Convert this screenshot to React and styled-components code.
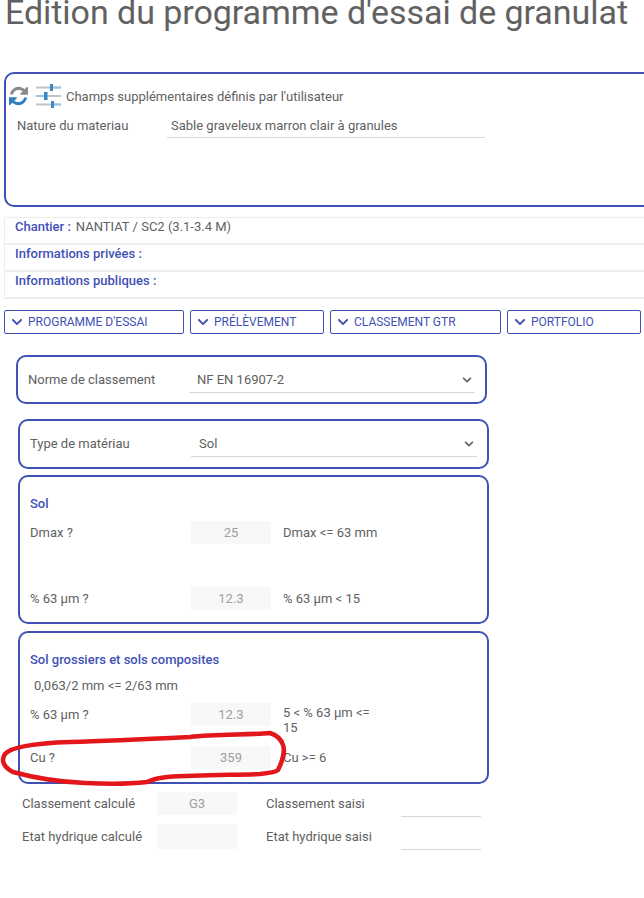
import React from 'react';
import styled, { createGlobalStyle } from 'styled-components';
import { FaChevronDown } from 'react-icons/fa';

const blue = '#3f51b5';

const GlobalStyle = createGlobalStyle`
  html, body {
    margin: 0;
    padding: 0;
    background: #fff;
    overflow: hidden;
  }
  body {
    font-family: Roboto, "Liberation Sans", sans-serif;
    color: #616161;
    font-size: 13px;
  }
`;

const Page = styled.div`
  position: relative;
  width: 644px;
  height: 898px;
  overflow: hidden;
`;

const Title = styled.h1`
  margin: -8px 0 0 5px;
  height: 80px;
  font-size: 34px;
  line-height: 40px;
  font-weight: 400;
  letter-spacing: -0.05px;
  white-space: nowrap;
  color: #616161;
`;

const UserPanel = styled.section`
  box-sizing: border-box;
  margin-left: 4px;
  width: 660px;
  height: 135px;
  border: 2px solid ${blue};
  border-radius: 10px;
  padding: 9px 0 0 2px;
`;

const PanelHead = styled.div`
  display: flex;
  align-items: center;
  height: 26px;
  gap: 5px;
`;

const IconGroup = styled.div`
  display: flex;
  align-items: center;
  gap: 7px;
`;

const NatureRow = styled.div`
  display: flex;
  align-items: flex-start;
  margin: 8px 0 0 9px;
`;

const NatureLabel = styled.div`
  width: 150px;
  line-height: 18px;
`;

const NatureValue = styled.div`
  width: 318px;
  height: 21px;
  box-sizing: border-box;
  padding-left: 4px;
  line-height: 18px;
  border-bottom: 1px solid #d8d8d8;
`;

const InfoBox = styled.section`
  margin: 10px 0 0 4px;
  width: 660px;
  border-top: 1px solid #eeeeee;
  border-left: 1px solid #eeeeee;
`;

const InfoRow = styled.div`
  box-sizing: border-box;
  height: 27px;
  padding-left: 10px;
  line-height: 17px;
  border-bottom: 2px solid #eeeeee;
`;

const InfoLabel = styled.span`
  color: ${blue};
  font-weight: 500;
  margin-right: 5px;
`;

const Tabs = styled.nav`
  display: flex;
  gap: 6px;
  margin: 11px 0 0 4px;
`;

const Tab = styled.button`
  box-sizing: border-box;
  display: flex;
  align-items: center;
  gap: 5px;
  width: ${({ $w }) => $w}px;
  height: 24px;
  padding: 0 0 0 6px;
  background: #fff;
  border: 1px solid ${blue};
  border-radius: 2px;
  color: ${blue};
  font-family: inherit;
  font-size: 12px;
  white-space: nowrap;
`;

const Card = styled.section`
  box-sizing: border-box;
  width: ${({ $w }) => $w}px;
  height: ${({ $h }) => $h}px;
  margin: ${({ $top }) => $top}px 0 0 ${({ $left }) => $left}px;
  border: 2px solid ${blue};
  border-radius: 10px;
`;

const SelectRow = styled.div`
  display: flex;
  align-items: flex-start;
  padding: 14px 0 0 10px;
`;

const SelectLabel = styled.div`
  width: 161px;
  line-height: 18px;
`;

const SelectField = styled.div`
  box-sizing: border-box;
  display: flex;
  justify-content: space-between;
  width: 286px;
  height: 22px;
  padding: 0 3px 0 8px;
  line-height: 18px;
  border-bottom: 1px solid #d8d8d8;
`;

const SelectArrow = styled(FaChevronDown)`
  width: 10px;
  height: 10px;
  margin-top: 4px;
`;

const SectionTitle = styled.h3`
  margin: 0;
  padding: ${({ $pad }) => $pad}px 0 0 10px;
  color: ${blue};
  font-size: 13px;
  font-weight: 500;
  line-height: 16px;
`;

const Note = styled.div`
  padding-left: 14px;
  margin-top: 10px;
  line-height: 16px;
`;

const Line = styled.div`
  display: grid;
  grid-template-columns: 161px 80px 112px;
  align-items: start;
  padding-left: 10px;
  margin-top: ${({ $top }) => $top}px;
`;

const LineLabel = styled.div`
  line-height: 23px;
`;

const ReadOnly = styled.div`
  height: 23px;
  line-height: 23px;
  text-align: center;
  background: #f8f8f8;
  color: #9e9e9e;
`;

const Criterion = styled.div`
  padding-left: 12px;
  line-height: ${({ $wrapped }) => ($wrapped ? '15px' : '23px')};
  margin-top: ${({ $wrapped }) => ($wrapped ? '2px' : '0')};
`;

const Results = styled.div`
  display: grid;
  grid-template-columns: 135px 80px 29px 135px 80px;
  grid-auto-rows: 33px;
  margin: 3px 0 0 22px;
  align-items: center;
`;

const ResultBox = styled(ReadOnly)`
  height: ${({ $h }) => $h}px;
  line-height: ${({ $h }) => $h}px;
`;

const Blank = styled.div``;

const Saisi = styled.div`
  align-self: start;
  height: 30px;
  box-sizing: border-box;
  border-bottom: 1px solid #d8d8d8;
`;

const Scribble = styled.svg`
  position: absolute;
  left: 0;
  top: 730px;
  pointer-events: none;
`;

const SliderIcon = () => (
  <svg width="25" height="24" viewBox="0 0 25 24">
    <path d="M0 3.5h25M0 12h25M0 20.5h25" stroke="#c4c4c4" strokeWidth="2" />
    <path d="M0 12h8M17 3.5h8M18 20.5h7" stroke="#9dc3e3" strokeWidth="2" />
    <g fill="#3d85c6">
      <rect x="14" y="0" width="3" height="7" />
      <rect x="8" y="8" width="3.5" height="8" />
      <rect x="15" y="17" width="3" height="7" />
    </g>
  </svg>
);

const SyncIcon = () => (
  <svg width="21" height="24" viewBox="0 0 20 24">
    <path d="M1.5 10.5C2.3 5.900 6 2.800 10 2.800c2.500 0 4.600 1 6.100 2.500l2.200-2.200c.5-.4 1.200-.1 1.200.5v7.100h-7.100c-.7 0-1-.7-.5-1.200l2.200-2.200C13 6.500 11.700 6 10 6c-3 0-5 1.800-5.700 4.500z" fill="#8a8a8a" />
    <path d="M18.500 13.500c-.8 4.600-4.500 7.700-8.500 7.700-2.500 0-4.600-1-6.100-2.500l-2.200 2.200c-.5.4-1.200.1-1.200-.5v-7.100h7.100c.7 0 1 .7.5 1.200l-2.200 2.200C7 17.500 8.300 18 10 18c3 0 5-1.800 5.700-4.500z" fill="#2f7fc1" />
  </svg>
);

const tabs = [
  { label: "PROGRAMME D'ESSAI", w: 180 },
  { label: 'PRÉLÈVEMENT', w: 134 },
  { label: 'CLASSEMENT GTR', w: 171 },
  { label: 'PORTFOLIO', w: 134 },
];

const App = () => (
  <Page>
    <GlobalStyle />
    <Title>Edition du programme d'essai de granulat</Title>

    <UserPanel>
      <PanelHead>
        <IconGroup>
          <SyncIcon />
          <SliderIcon />
        </IconGroup>
        <span>Champs supplémentaires définis par l'utilisateur</span>
      </PanelHead>
      <NatureRow>
        <NatureLabel>Nature du materiau</NatureLabel>
        <NatureValue>Sable graveleux marron clair à granules</NatureValue>
      </NatureRow>
    </UserPanel>

    <InfoBox>
      <InfoRow>
        <InfoLabel>Chantier :</InfoLabel>NANTIAT / SC2 (3.1-3.4 M)
      </InfoRow>
      <InfoRow>
        <InfoLabel>Informations privées :</InfoLabel>
      </InfoRow>
      <InfoRow>
        <InfoLabel>Informations publiques :</InfoLabel>
      </InfoRow>
    </InfoBox>

    <Tabs>
      {tabs.map((t) => (
        <Tab key={t.label} $w={t.w}>
          <FaChevronDown size={12} />
          {t.label}
        </Tab>
      ))}
    </Tabs>

    <Card $w={471} $h={49} $top={21} $left={16}>
      <SelectRow>
        <SelectLabel>Norme de classement</SelectLabel>
        <SelectField>
          NF EN 16907-2
          <SelectArrow />
        </SelectField>
      </SelectRow>
    </Card>

    <Card $w={471} $h={50} $top={15} $left={18}>
      <SelectRow>
        <SelectLabel>Type de matériau</SelectLabel>
        <SelectField>
          Sol
          <SelectArrow />
        </SelectField>
      </SelectRow>
    </Card>

    <Card $w={471} $h={149} $top={6} $left={18}>
      <SectionTitle $pad={19}>Sol</SectionTitle>
      <Line $top={9}>
        <LineLabel>Dmax ?</LineLabel>
        <ReadOnly>25</ReadOnly>
        <Criterion>Dmax &lt;= 63 mm</Criterion>
      </Line>
      <Line $top={43}>
        <LineLabel>% 63 µm ?</LineLabel>
        <ReadOnly>12.3</ReadOnly>
        <Criterion>% 63 µm &lt; 15</Criterion>
      </Line>
    </Card>

    <Card $w={471} $h={153} $top={7} $left={18}>
      <SectionTitle $pad={19}>Sol grossiers et sols composites</SectionTitle>
      <Note>0,063/2 mm &lt;= 2/63 mm</Note>
      <Line $top={9}>
        <LineLabel>% 63 µm ?</LineLabel>
        <ReadOnly>12.3</ReadOnly>
        <Criterion $wrapped>5 &lt; % 63 µm &lt;= 15</Criterion>
      </Line>
      <Line $top={11}>
        <LineLabel>Cu ?</LineLabel>
        <ReadOnly>359</ReadOnly>
        <Criterion>Cu &gt;= 6</Criterion>
      </Line>
    </Card>

    <Results>
      <span>Classement calculé</span>
      <ResultBox $h={23}>G3</ResultBox>
      <Blank />
      <span>Classement saisi</span>
      <Saisi />
      <span>Etat hydrique calculé</span>
      <ResultBox $h={25} />
      <Blank />
      <span>Etat hydrique saisi</span>
      <Saisi />
    </Results>

    <Scribble width="290" height="60" viewBox="0 0 290 60">
      <path
        d="M270 3 C250 5 215 4 190 7 C150 9 110 11 70 12 C40 13 12 16 5 24 C0 31 5 38 13 42 C35 48 60 52 85 53 C105 54 130 54 147 52 C155 48 160 48 167 47 C200 45 235 45 260 44 C270 43 276 42 278 40 C283 30 285 20 283 15 C281 8 276 5 270 3 Z"
        fill="none"
        stroke="#e3161b"
        strokeWidth="4.5"
        strokeLinejoin="round"
      />
    </Scribble>
  </Page>
);

export default App;
